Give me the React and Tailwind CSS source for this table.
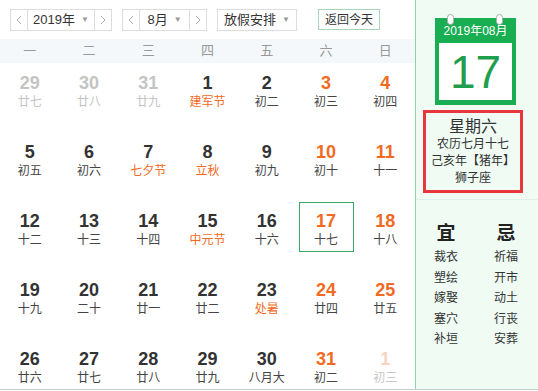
const rows = [
  [
    { d: "29", l: "廿七", t: "old" },
    { d: "30", l: "廿八", t: "old" },
    { d: "31", l: "廿九", t: "old" },
    { d: "1", l: "建军节", fest: true },
    { d: "2", l: "初二" },
    { d: "3", l: "初三", wk: true },
    { d: "4", l: "初四", wk: true },
  ],
  [
    { d: "5", l: "初五" },
    { d: "6", l: "初六" },
    { d: "7", l: "七夕节", fest: true },
    { d: "8", l: "立秋", fest: true },
    { d: "9", l: "初九" },
    { d: "10", l: "初十", wk: true },
    { d: "11", l: "十一", wk: true },
  ],
  [
    { d: "12", l: "十二" },
    { d: "13", l: "十三" },
    { d: "14", l: "十四" },
    { d: "15", l: "中元节", fest: true },
    { d: "16", l: "十六" },
    { d: "17", l: "十七", wk: true, today: true },
    { d: "18", l: "十八", wk: true },
  ],
  [
    { d: "19", l: "十九" },
    { d: "20", l: "二十" },
    { d: "21", l: "廿一" },
    { d: "22", l: "廿二" },
    { d: "23", l: "处暑", fest: true },
    { d: "24", l: "廿四", wk: true },
    { d: "25", l: "廿五", wk: true },
  ],
  [
    { d: "26", l: "廿六" },
    { d: "27", l: "廿七" },
    { d: "28", l: "廿八" },
    { d: "29", l: "廿九" },
    { d: "30", l: "八月大" },
    { d: "31", l: "初二", wk: true },
    { d: "1", l: "初三", t: "next" },
  ],
];

const weekdays = ["一", "二", "三", "四", "五", "六", "日"];
const yi = ["裁衣", "塑绘", "嫁娶", "塞穴", "补垣"];
const ji = ["祈福", "开市", "动土", "行丧", "安葬"];

function Caret() {
  return <span className="text-[8px] text-[#999] ml-[6px] leading-none">▼</span>;
}

function Arrow({ dir }) {
  return (
    <span className="w-[16px] h-full flex items-center justify-center">
      <svg width="6" height="10" viewBox="0 0 6 10" fill="none">
        <path d={dir === "l" ? "M5 1L1 5l4 4" : "M1 1l4 4-4 4"} stroke="#aaa" strokeWidth="1" />
      </svg>
    </span>
  );
}

function Picker({ label, w }) {
  return (
    <div className="h-[22px] flex items-center border border-[#ddd] bg-white">
      <Arrow dir="l" />
      <div className={`${w} h-full flex items-center justify-center border-x border-[#ddd] text-[13px] text-[#333]`}>
        {label}
        <Caret />
      </div>
      <Arrow dir="r" />
    </div>
  );
}

function Cell({ c }) {
  let num = "text-[#333]";
  let lun = "text-[#444]";
  if (c.t === "old") {
    num = "text-[#c4c4c4]";
    lun = "text-[#c4c4c4]";
  } else if (c.t === "next") {
    num = "text-[#f7d4c2]";
    lun = "text-[#c8c8c8]";
  } else {
    if (c.wk) num = "text-[#f26a22]";
    if (c.fest) lun = "text-[#f26a22]";
  }
  return (
    <div className="h-[69px] flex justify-center">
      <div
        className={`w-[55px] h-[50px] mt-px flex flex-col items-center ${
          c.today ? "border border-[#3aa564] pt-[7px]" : "pt-[8px]"
        }`}
      >
        <span className={`text-[18px] font-bold leading-[22px] ${num}`} style={{ fontFamily: "'Liberation Sans', Arial, sans-serif" }}>
          {c.d}
        </span>
        <span className={`text-[12px] leading-[16px] ${lun}`}>{c.l}</span>
      </div>
    </div>
  );
}

export default function App() {
  return (
    <div
      className="w-[538px] h-[390px] flex overflow-hidden border-b border-[#ccc] bg-white"
      style={{ fontFamily: "'Liberation Sans', 'Noto Sans CJK SC', sans-serif" }}
    >
      <div className="w-[415px] shrink-0 flex flex-col overflow-hidden">
        <div className="h-[39px] shrink-0 flex items-start pt-[9px] pl-[10px] gap-[10px]">
          <Picker label="2019年" w="w-[68px]" />
          <Picker label="8月" w="w-[51px]" />
          <div className="h-[22px] w-[80px] flex items-center justify-center border border-[#ddd] text-[13px] text-[#333]">
            放假安排
            <Caret />
          </div>
          <div className="h-[21px] w-[62px] ml-[11px] flex items-center justify-center border border-[#a8d5b6] text-[12px] text-[#333]">
            返回今天
          </div>
        </div>
        <div className="h-[24px] shrink-0 grid grid-cols-7 bg-[#f4f8fb]">
          {weekdays.map((w) => (
            <div key={w} className="flex items-center justify-center text-[13px] text-[#999]">
              {w}
            </div>
          ))}
        </div>
        <div className="grid grid-cols-7">
          {rows.flat().map((c, i) => (
            <Cell key={i} c={c} />
          ))}
        </div>
      </div>
      <div className="flex-1 border-l border-[#8fd0a6] bg-[#effbf3] flex flex-col items-center">
        <div className="relative mt-[18px] w-[81px] h-[87px] bg-[#1aae52] flex flex-col items-center px-[4px] pb-[5px] ml-[-3px]">
          <span className="absolute top-[-4px] left-[12px] w-[7px] h-[11px] rounded-full bg-white border border-[#aaa]" />
          <span className="absolute top-[-4px] right-[13px] w-[7px] h-[11px] rounded-full bg-white border border-[#aaa]" />
          <div className="h-[25px] flex items-center text-[12px] text-white">2019年08月</div>
          <div className="flex-1 w-full bg-white flex items-center justify-center">
            <span className="text-[46px] leading-none text-[#1f9e4d]" style={{ fontFamily: "'Liberation Sans', Arial, sans-serif" }}>
              17
            </span>
          </div>
        </div>
        <div className="mt-[5px] ml-[-8px] w-[100px] h-[83px] border-[3px] border-[#e8383d] flex flex-col items-center justify-center text-[#333]">
          <div className="text-[16px] leading-[19px]">星期六</div>
          <div className="text-[12px] leading-[17px]">农历七月十七</div>
          <div className="text-[12px] leading-[17px]">己亥年【猪年】</div>
          <div className="text-[12px] leading-[17px]">狮子座</div>
        </div>
        <div className="w-full mt-[6px] border-t border-[#e2efe6]" />
        <div className="flex gap-[36px] mt-[22px] ml-[-2px]">
          {[["宜", yi], ["忌", ji]].map(([h, list]) => (
            <div key={h} className="flex flex-col items-center">
              <div className="text-[19px] font-bold leading-[24px] text-[#222] mb-[1px]">{h}</div>
              {list.map((x) => (
                <div key={x} className="text-[12px] leading-[20.5px] text-[#333]">
                  {x}
                </div>
              ))}
            </div>
          ))}
        </div>
      </div>
    </div>
  );
}
